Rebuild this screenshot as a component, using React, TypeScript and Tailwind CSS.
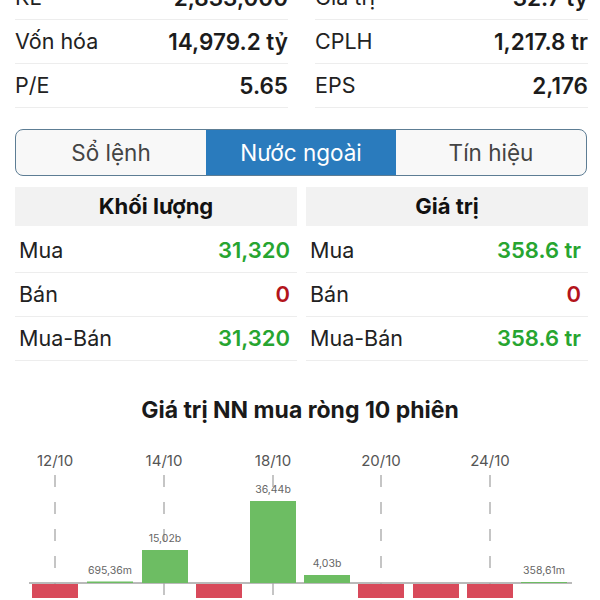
import React from "react";

type Stat = { label: string; value: string };

const leftStats: Stat[] = [
  { label: "KL", value: "2,833,000" },
  { label: "Vốn hóa", value: "14,979.2 tỷ" },
  { label: "P/E", value: "5.65" },
];

const rightStats: Stat[] = [
  { label: "Giá trị", value: "32.7 tỷ" },
  { label: "CPLH", value: "1,217.8 tr" },
  { label: "EPS", value: "2,176" },
];

type Flow = { label: string; value: string; tone: "up" | "down" };

const volume: Flow[] = [
  { label: "Mua", value: "31,320", tone: "up" },
  { label: "Bán", value: "0", tone: "down" },
  { label: "Mua-Bán", value: "31,320", tone: "up" },
];

const amount: Flow[] = [
  { label: "Mua", value: "358.6 tr", tone: "up" },
  { label: "Bán", value: "0", tone: "down" },
  { label: "Mua-Bán", value: "358.6 tr", tone: "up" },
];

// net foreign value per session, px relative to the zero line (positive = up)
const bars = [
  { x: 32, h: -40, label: "" },
  { x: 87, h: 1.5, label: "695,36m" },
  { x: 142, h: 33, label: "15,02b" },
  { x: 196, h: -40, label: "" },
  { x: 250, h: 82, label: "36,44b" },
  { x: 304, h: 8, label: "4,03b" },
  { x: 358, h: -40, label: "" },
  { x: 413, h: -40, label: "" },
  { x: 467, h: -40, label: "" },
  { x: 521, h: 1, label: "358,61m" },
];

const dates = [
  { x: 55, text: "12/10" },
  { x: 164, text: "14/10" },
  { x: 273, text: "18/10" },
  { x: 381, text: "20/10" },
  { x: 490, text: "24/10" },
];

const StatColumn = ({ rows }: { rows: Stat[] }) => (
  <div className="flex flex-col">
    {rows.map((r) => (
      <div
        key={r.label}
        className="h-[44px] flex items-center justify-between border-b border-[#ededed]"
      >
        <span className="text-[21.5px] text-[#222]">{r.label}</span>
        <span className="text-[22.5px] font-semibold text-[#1c1c1c]">{r.value}</span>
      </div>
    ))}
  </div>
);

const FlowColumn = ({ title, rows }: { title: string; rows: Flow[] }) => (
  <div className="flex flex-col">
    <div className="h-[39px] bg-[#f2f2f2] flex items-center justify-center text-[22px] font-bold text-[#111]">
      {title}
    </div>
    <div className="mt-[3px]">
      {rows.map((r) => (
        <div
          key={r.label}
          className="h-[44px] flex items-center justify-between pl-[4px] pr-[7px] border-b border-[#ededed]"
        >
          <span className="text-[21.5px] text-[#222]">{r.label}</span>
          <span
            className={`text-[22px] font-semibold ${
              r.tone === "up" ? "text-[#27a530]" : "text-[#b3141b]"
            }`}
          >
            {r.value}
          </span>
        </div>
      ))}
    </div>
  </div>
);

const Chart = () => {
  const zero = 145; // y of zero line inside the svg (page y 585)
  return (
    <svg width={600} height={160} className="block">
      {dates.map((d) => (
        <g key={d.text}>
          <text
            x={d.x}
            y={28}
            textAnchor="middle"
            fontSize={15}
            fill="#555"
            fontFamily="Inter, sans-serif"
          >
            {d.text}
          </text>
          <line
            x1={d.x}
            y1={37}
            x2={d.x}
            y2={160}
            stroke="#b3b3b3"
            strokeWidth={1.5}
            strokeDasharray="12 15"
          />
        </g>
      ))}
      <line x1={29} y1={zero} x2={572} y2={zero} stroke="#a3a3a3" strokeWidth={1.5} />
      {bars.map((b, i) =>
        b.h > 0 ? (
          <rect key={i} x={b.x} y={zero - b.h} width={46} height={b.h} fill="#6dbd63" />
        ) : (
          <rect key={i} x={b.x} y={zero + 1} width={46} height={-b.h} fill="#d84a5b" />
        )
      )}
      {bars.map((b, i) =>
        b.label ? (
          <text
            key={"l" + i}
            x={b.x + 23}
            y={zero - b.h - 8}
            textAnchor="middle"
            fontSize={10.5}
            fill="#666"
            fontFamily="Inter, sans-serif"
          >
            {b.label}
          </text>
        ) : null
      )}
    </svg>
  );
};

export default function App() {
  const tabs = ["Sổ lệnh", "Nước ngoài", "Tín hiệu"];
  return (
    <div
      className="w-[600px] h-[600px] overflow-hidden bg-white"
      style={{ fontFamily: "Inter, 'Noto Sans', sans-serif" }}
    >
      <div className="-mt-[24px] pl-[15px] pr-[12px] grid grid-cols-2 gap-x-[27px]">
        <StatColumn rows={leftStats} />
        <StatColumn rows={rightStats} />
      </div>

      <div className="mt-[21px] ml-[15px] mr-[13px] h-[47px] flex border border-[#5d7d94] rounded-[8px] overflow-hidden bg-[#f8f8f8]">
        {tabs.map((t, i) => (
          <div
            key={t}
            className={`flex-1 flex items-center justify-center text-[22.5px] ${
              i === 1 ? "bg-[#2a7bbd] text-white" : "text-[#444]"
            }`}
          >
            {t}
          </div>
        ))}
      </div>

      <div className="mt-[11px] pl-[15px] pr-[12px] grid grid-cols-2 gap-x-[9px]">
        <FlowColumn title="Khối lượng" rows={volume} />
        <FlowColumn title="Giá trị" rows={amount} />
      </div>

      <div className="mt-[37px] h-[24px] flex items-center justify-center text-[23px] font-bold text-[#1a1a1a]">
        Giá trị NN mua ròng 10 phiên
      </div>

      <div className="mt-[16px]">
        <Chart />
      </div>
    </div>
  );
}
